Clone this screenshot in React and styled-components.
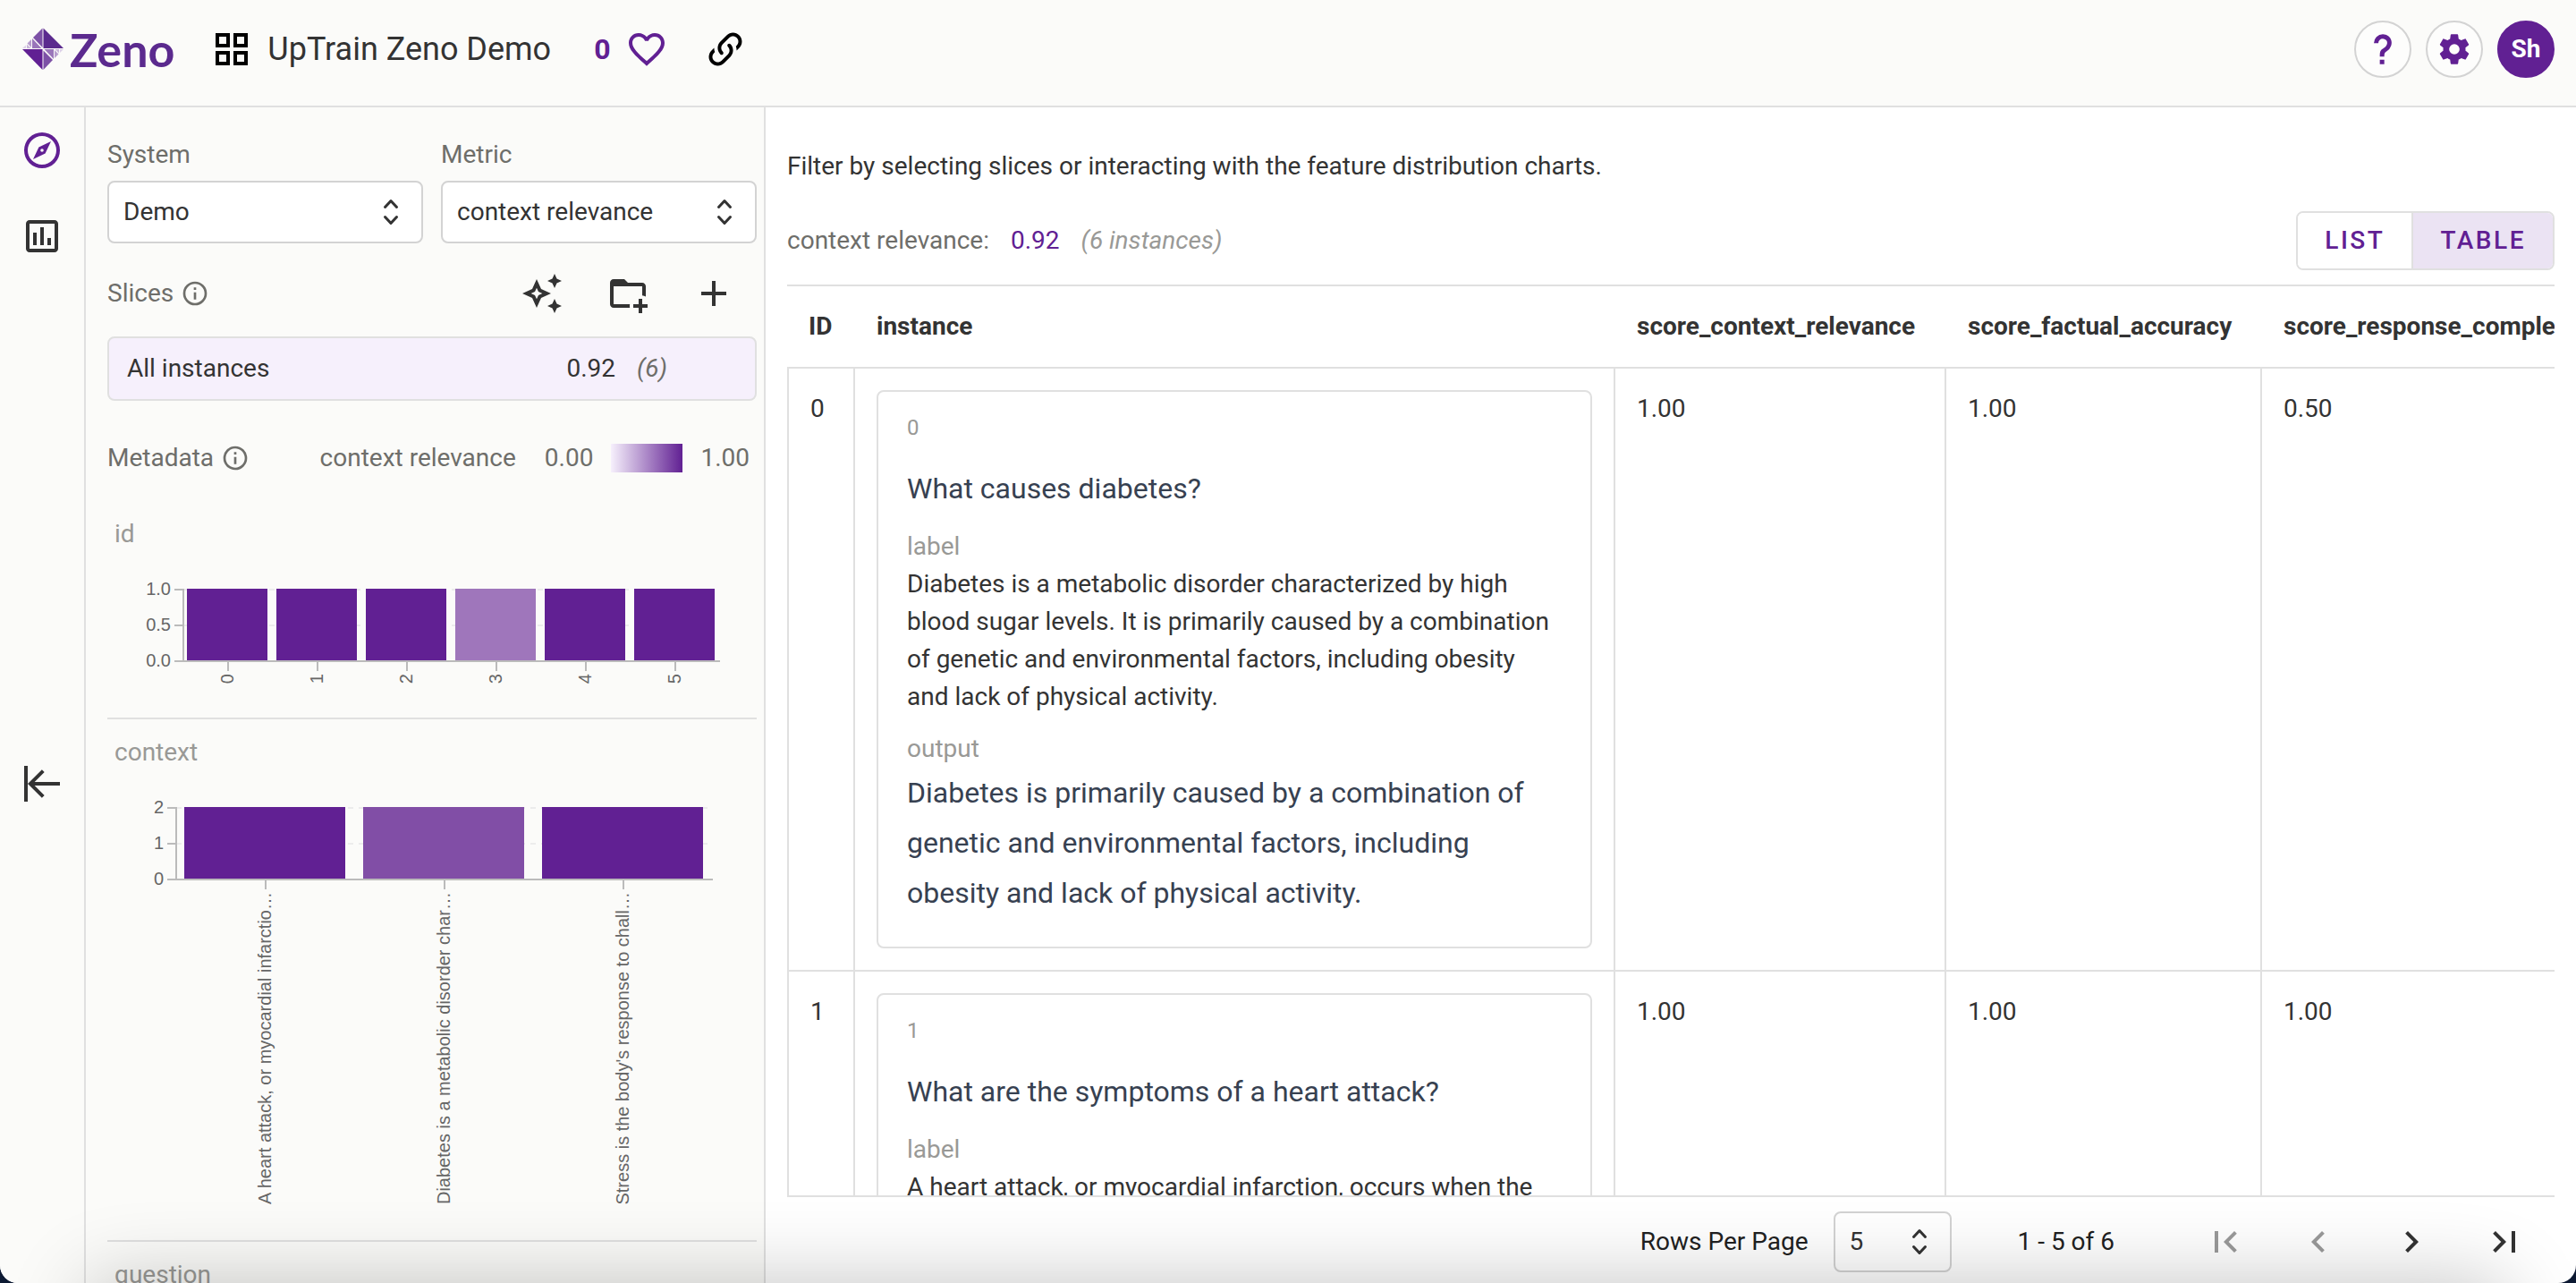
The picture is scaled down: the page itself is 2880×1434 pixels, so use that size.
import React from "react";
import styled, { createGlobalStyle } from "styled-components";

const purple = "#612093";
const line = "#e0e0e0";
const ink = "#333333";
const muted = "#6e6e6a";
const faint = "#999996";

const GlobalStyle = createGlobalStyle`
  *, *::before, *::after { box-sizing: border-box; }
  html, body, #root { height: 100%; }
  body {
    margin: 0;
    overflow: hidden;
    background: #0d1a33;
    color: ${ink};
    font-family: Roboto, "Liberation Sans", sans-serif;
    font-size: 28px;
    line-height: 42px;
  }
  button, select { font: inherit; color: inherit; }
  p, h1, h2 { margin: 0; font-weight: 400; }
`;

const paths = {
  grid: "M3 11h8V3H3v8zm2-6h4v4H5V5zM13 3v8h8V3h-8zm6 6h-4V5h4v4zM3 21h8v-8H3v8zm2-6h4v4H5v-4zM13 21h8v-8h-8v8zm2-6h4v4h-4v-4z",
  heart:
    "M16.5 3c-1.74 0-3.41.81-4.5 2.09C10.91 3.81 9.24 3 7.5 3 4.42 3 2 5.42 2 8.5c0 3.78 3.4 6.86 8.55 11.54L12 21.35l1.45-1.32C18.6 15.36 22 12.28 22 8.5 22 5.42 19.58 3 16.5 3zm-4.4 15.55l-.1.1-.1-.1C7.14 14.24 4 11.39 4 8.5 4 6.5 5.5 5 7.5 5c1.54 0 3.04.99 3.57 2.36h1.87C13.46 5.99 14.96 5 16.5 5c2 0 3.5 1.5 3.5 3.5 0 2.89-3.14 5.74-7.9 10.05z",
  link: "M10.59,13.41C11,13.8 11,14.44 10.59,14.83C10.2,15.22 9.56,15.22 9.17,14.83C7.22,12.88 7.22,9.71 9.17,7.76V7.76L12.71,4.22C14.66,2.27 17.83,2.27 19.78,4.22C21.73,6.17 21.73,9.34 19.78,11.29L18.29,12.78C18.3,11.96 18.17,11.14 17.89,10.36L18.36,9.88C19.54,8.71 19.54,6.81 18.36,5.64C17.19,4.46 15.29,4.46 14.12,5.64L10.59,9.17C9.41,10.34 9.41,12.24 10.59,13.41M13.41,9.17C13.8,8.78 14.44,8.78 14.83,9.17C16.78,11.12 16.78,14.29 14.83,16.24V16.24L11.29,19.78C9.34,21.73 6.17,21.73 4.22,19.78C2.27,17.83 2.27,14.66 4.22,12.71L5.71,11.22C5.7,12.04 5.83,12.86 6.11,13.65L5.64,14.12C4.46,15.29 4.46,17.19 5.64,18.36C6.81,19.54 8.71,19.54 9.88,18.36L13.41,14.83C14.59,13.66 14.59,11.76 13.41,10.59C13,10.2 13,9.56 13.41,9.17Z",
  compass:
    "M7,17L10.2,10.2L17,7L13.8,13.8L7,17M12,11.1A0.9,0.9 0 0,0 11.1,12A0.9,0.9 0 0,0 12,12.9A0.9,0.9 0 0,0 12.9,12A0.9,0.9 0 0,0 12,11.1M12,2A10,10 0 0,1 22,12A10,10 0 0,1 12,22A10,10 0 0,1 2,12A10,10 0 0,1 12,2M12,4A8,8 0 0,0 4,12A8,8 0 0,0 12,20A8,8 0 0,0 20,12A8,8 0 0,0 12,4Z",
  chart:
    "M9 17H7V10H9V17M13 17H11V7H13V17M17 17H15V13H17V17M19 19H5V5H19V19.1M19 3H5C3.9 3 3 3.9 3 5V19C3 20.1 3.9 21 5 21H19C20.1 21 21 20.1 21 19V5C21 3.9 20.1 3 19 3Z",
  collapse:
    "M11.92,19.92L4,12L11.92,4.08L13.33,5.5L7.83,11H22V13H7.83L13.34,18.5L11.92,19.92M4,12V2H2V22H4V12Z",
  info: "M11,9H13V7H11M12,20C7.59,20 4,16.41 4,12C4,7.59 7.59,4 12,4C16.41,4 20,7.59 20,12C20,16.41 16.41,20 12,20M12,2A10,10 0 0,0 2,12A10,10 0 0,0 12,22A10,10 0 0,0 22,12A10,10 0 0,0 12,2M11,17H13V11H11V17Z",
  sparkle:
    "M19 9l1.25-2.75L23 5l-2.75-1.25L19 1l-1.25 2.75L15 5l2.75 1.25L19 9zm0 6l-1.25 2.75L15 19l2.75 1.25L19 23l1.25-2.75L23 19l-2.75-1.25L19 15zm-7.5-5.5L9 4 6.5 9.5 1 12l5.5 2.5L9 20l2.5-5.5L17 12l-5.5-2.5zm-1.51 3.49L9 15.17l-.99-2.18L5.83 12l2.18-.99L9 8.83l.99 2.18 2.18.99-2.18.99z",
  folder:
    "M13 19C13 19.34 13.04 19.67 13.09 20H4C2.9 20 2 19.11 2 18V6C2 4.89 2.89 4 4 4H10L12 6H20C21.1 6 22 6.89 22 8V13.81C21.39 13.46 20.72 13.22 20 13.09V8H4V18H13.09C13.04 18.33 13 18.66 13 19M20 18V15H18V18H15V20H18V23H20V20H23V18H20Z",
  plus: "M19,13H13V19H11V13H5V11H11V5H13V11H19V13Z",
  help: "M10,19H13V22H10V19M12,2C17.35,2.22 19.68,7.62 16.5,11.67C15.67,12.67 14.33,13.33 13.67,14.17C13,15 13,16 13,17H10C10,15.33 10,13.92 10.67,12.92C11.33,11.92 12.67,11.33 13.5,10.67C15.92,8.43 15.32,5.26 12,5A3,3 0 0,0 9,8H6A6,6 0 0,1 12,2Z",
  cog: "M12,15.5A3.5,3.5 0 0,1 8.5,12A3.5,3.5 0 0,1 12,8.5A3.5,3.5 0 0,1 15.5,12A3.5,3.5 0 0,1 12,15.5M19.43,12.97C19.47,12.65 19.5,12.33 19.5,12C19.5,11.67 19.47,11.34 19.43,11L21.54,9.37C21.73,9.22 21.78,8.95 21.66,8.73L19.66,5.27C19.54,5.05 19.27,4.96 19.05,5.05L16.56,6.05C16.04,5.66 15.5,5.32 14.87,5.07L14.5,2.42C14.46,2.18 14.25,2 14,2H10C9.75,2 9.54,2.18 9.5,2.42L9.13,5.07C8.5,5.32 7.96,5.66 7.44,6.05L4.95,5.05C4.73,4.96 4.46,5.05 4.34,5.27L2.34,8.73C2.21,8.95 2.27,9.22 2.46,9.37L4.57,11C4.53,11.34 4.5,11.67 4.5,12C4.5,12.33 4.53,12.65 4.57,12.97L2.46,14.63C2.27,14.78 2.21,15.05 2.34,15.27L4.34,18.73C4.46,18.95 4.73,19.03 4.95,18.95L7.44,17.94C7.96,18.34 8.5,18.68 9.13,18.93L9.5,21.58C9.54,21.82 9.75,22 10,22H14C14.25,22 14.46,21.82 14.5,21.58L14.87,18.93C15.5,18.67 16.04,18.34 16.56,17.94L19.05,18.95C19.27,19.03 19.54,18.95 19.66,18.73L21.66,15.27C21.78,15.05 21.73,14.78 21.54,14.63L19.43,12.97Z",
  first: "M18.41 16.59L13.82 12l4.59-4.59L17 6l-6 6 6 6zM6 6h2v12H6z",
  prev: "M15.41 7.41L14 6l-6 6 6 6 1.41-1.41L10.83 12z",
  next: "M10 6L8.59 7.41 13.17 12l-4.58 4.59L10 18l6-6z",
  last: "M5.59 7.41L10.18 12l-4.59 4.59L7 18l6-6-6-6zM16 6h2v12h-2z",
};

const IconSvg = styled.svg`
  display: block;
  flex: none;
  fill: ${(p) => p.$color || "currentColor"};
`;

function Icon({ name, size = 48, color }) {
  return (
    <IconSvg width={size} height={size} viewBox="0 0 24 24" $color={color} aria-hidden="true">
      <path d={paths[name]} />
    </IconSvg>
  );
}

const Page = styled.div`
  display: flex;
  flex-direction: column;
  height: 100%;
  overflow: hidden;
  background: #fff;
  border-radius: 0 0 20px 20px;
`;

/* Header */

const Header = styled.header`
  display: flex;
  align-items: center;
  justify-content: space-between;
  flex: none;
  height: 120px;
  padding: 0 24px 8px;
  background: #fbfbf9;
  border-bottom: 2px solid ${line};
`;

const HeaderGroup = styled.div`
  display: flex;
  align-items: center;
  gap: ${(p) => p.$gap}px;
`;

const Brand = styled.a`
  display: flex;
  align-items: center;
  gap: 6px;
  margin-right: 40px;
  color: #5b2a8e;
  font-family: Lato, sans-serif;
  font-size: 52px;
  font-weight: 700;
  line-height: 48px;
  text-decoration: none;
`;

const Title = styled.h1`
  margin-left: 16px;
  font-size: 36px;
  line-height: 48px;
`;

const BareButton = styled.button`
  display: flex;
  align-items: center;
  padding: 0;
  border: 0;
  background: none;
  color: ${(p) => p.$color || ink};
  &:disabled { color: #9a9a9a; }
`;

const LikeButton = styled(BareButton)`
  gap: 16px;
  margin: 0 40px 0 48px;
  font-size: 32px;
  font-weight: 700;
`;

const RoundButton = styled.button`
  display: flex;
  align-items: center;
  justify-content: center;
  width: 64px;
  height: 64px;
  padding: 0;
  border-radius: 50%;
  border: 2px solid ${(p) => (p.$solid ? purple : "#d3d3d3")};
  background: ${(p) => (p.$solid ? purple : "#fdfdfc")};
  color: ${(p) => (p.$solid ? "#fff" : purple)};
  font-weight: 700;
`;

function Gem() {
  return (
    <svg width="48" height="48" viewBox="0 0 48 48" aria-hidden="true">
      <path d="M24.500 0.500V23H47Z" fill="#5b2a8e" />
      <path d="M23.500 0.500V22L13 11Z" fill="#7d51a6" />
      <path d="M12 12V23H22.500Z" fill="#9a76ba" />
      <path d="M11 13V22L6.500 17.500Z" fill="#b79dcd" />
      <path d="M6 18.500V23H10.500Z" fill="#c9b6da" />
      <path d="M5 19.500V23H1Z" fill="#ddd1e8" />
      <path d="M1 24H23.500V47Z" fill="#612093" />
      <path d="M24.500 25.500V47L35 36Z" fill="#7d51a6" />
      <path d="M25.500 24H36V35Z" fill="#9a76ba" />
      <path d="M37 25V34L41.500 29.500Z" fill="#b79dcd" />
      <path d="M37.500 24H42V28.500Z" fill="#c9b6da" />
      <path d="M43 24H47L43 28Z" fill="#ddd1e8" />
    </svg>
  );
}

/* Body */

const Body = styled.div`
  display: flex;
  flex: 1;
  min-height: 0;
`;

const Rail = styled.nav`
  display: flex;
  flex-direction: column;
  flex: none;
  width: 96px;
  background: #fbfbf9;
  border-right: 2px solid ${line};
`;

const RailLink = styled.a`
  display: flex;
  align-items: center;
  justify-content: center;
  height: 96px;
  color: ${(p) => (p.$active ? purple : ink)};
`;

const RailMiddle = styled.div`
  display: flex;
  flex: 1;
  align-items: center;
  justify-content: center;
  padding-top: 6px;
`;

const Sidebar = styled.aside`
  display: flex;
  flex-direction: column;
  flex: none;
  width: 760px;
  padding: 32px 8px 0 24px;
  overflow: hidden;
  background: #fbfbf9;
  border-right: 2px solid ${line};
`;

const Fields = styled.div`
  display: flex;
  flex: none;
  gap: 20px;
`;

const Field = styled.div`
  display: flex;
  flex: 1;
  flex-direction: column;
  gap: 8px;
  min-width: 0;
  color: ${muted};
`;

const SelectBox = styled.div`
  position: relative;
  color: ${ink};
  width: ${(p) => p.$width || "100%"};
`;

const SelectInput = styled.select`
  display: block;
  width: 100%;
  height: ${(p) => p.$height}px;
  padding: 0 16px;
  border: 2px solid #d3d3d3;
  border-radius: 8px;
  background: ${(p) => p.$fill};
  appearance: none;
`;

const SelectArrows = styled.svg`
  position: absolute;
  top: 0;
  bottom: 0;
  right: 16px;
  margin: auto 0;
  fill: currentColor;
  pointer-events: none;
`;

function Select({ id, value, height = 70, width, fill = "#fff" }) {
  return (
    <SelectBox $width={width}>
      <SelectInput id={id} $height={height} $fill={fill} defaultValue={value}>
        <option>{value}</option>
      </SelectInput>
      <SelectArrows width="40" height="40" viewBox="0 0 20 20" aria-hidden="true">
        <path d="M10 3a.75.75 0 01.55.24l3.25 3.5a.75.75 0 11-1.1 1.02L10 4.852 7.3 7.76a.75.75 0 01-1.1-1.02l3.25-3.5A.75.75 0 0110 3zm-3.76 9.2a.75.75 0 011.06.04l2.7 2.908 2.7-2.908a.75.75 0 111.1 1.02l-3.25 3.5a.75.75 0 01-1.1 0l-3.25-3.5a.75.75 0 01.04-1.06z" />
      </SelectArrows>
    </SelectBox>
  );
}

const SliceBar = styled.div`
  display: flex;
  flex: none;
  align-items: center;
  justify-content: space-between;
  margin: 32px 24px 24px 0;
  color: ${muted};
`;

const Heading = styled.h2`
  display: flex;
  align-items: center;
  gap: 8px;
  font-size: 28px;
  line-height: 40px;
  color: ${muted};
`;

const Tools = styled.div`
  display: flex;
  gap: 48px;
`;

const SliceRow = styled.button`
  display: flex;
  flex: none;
  align-items: center;
  gap: 24px;
  height: 72px;
  padding: 0 98px 0 20px;
  border: 2px solid ${line};
  border-radius: 8px;
  background: #f6f0fc;
  text-align: left;
`;

const SliceName = styled.span`
  flex: 1;
`;

const Count = styled.em`
  color: ${(p) => p.$color};
`;

const MetaBar = styled.div`
  display: flex;
  flex: none;
  align-items: center;
  gap: 20px;
  margin: 44px 0 28px;
  padding-right: 8px;
  line-height: 40px;
  color: ${muted};
`;

const MetaMetric = styled.span`
  flex: 1;
  margin-right: 12px;
  text-align: right;
`;

const Ramp = styled.span`
  width: 80px;
  height: 32px;
  background: linear-gradient(to right, #f6f0fc, ${purple});
`;

const Section = styled.section`
  flex: none;
  padding-top: 16px;
  border-bottom: 2px solid ${line};
`;

const SectionTitle = styled.h2`
  padding-left: 8px;
  font-size: 28px;
  line-height: 42px;
  color: ${faint};
`;

const Plot = styled.svg`
  display: block;
  overflow: visible;
  font-family: "Liberation Sans", Arial, sans-serif;
  font-size: 20px;
  fill: #666;
`;

/* Vertical bar chart; bars share one height and are tinted by their score. */
function BarChart({ height, axisX, step, barWidth, inset, ticks, bars }) {
  const top = 40;
  const base = 120;
  const end = axisX + step * bars.length;
  return (
    <Plot width="100%" height={height}>
      {ticks.map((t, i) => {
        const y = base + 1 - (80 * i) / (ticks.length - 1);
        return (
          <g key={t}>
            <line x1={axisX} x2={end} y1={y} y2={y} stroke="#ececec" strokeWidth="2" strokeDasharray="6 6" />
            <line x1={axisX - 10} x2={axisX} y1={y} y2={y} stroke="#bbb" strokeWidth="2" />
            <text x={axisX - 14} y={y + 6} textAnchor="end">{t}</text>
          </g>
        );
      })}
      <line x1={axisX} x2={axisX} y1={top} y2={base + 2} stroke="#bbb" strokeWidth="2" />
      {bars.map((b, i) => {
        const mid = axisX + step * (i + 0.5);
        return (
          <g key={b.label}>
            <rect x={axisX + inset + step * i} y={top} width={barWidth} height={80} fill={b.color} />
            <line x1={mid} x2={mid} y1={base} y2={base + 12} stroke="#bbb" strokeWidth="2" />
            <text transform={`translate(${mid + 6} ${base + 15}) rotate(-90)`} textAnchor="end">{b.label}</text>
          </g>
        );
      })}
      <line x1={axisX} x2={end} y1={base + 1} y2={base + 1} stroke="#bbb" strokeWidth="2" />
    </Plot>
  );
}

const idBars = ["0", "1", "2", "3", "4", "5"].map((label) => ({
  label,
  color: label === "3" ? "#9f76bb" : purple,
}));

const contextBars = [
  { label: "A heart attack, or myocardial infarctio…", color: purple },
  { label: "Diabetes is a metabolic disorder char…", color: "#814ea6" },
  { label: "Stress is the body's response to chall…", color: purple },
];

/* Main */

const Main = styled.main`
  display: flex;
  flex: 1;
  flex-direction: column;
  min-width: 0;
  padding: 45px 24px 0;
`;

const Summary = styled.div`
  display: flex;
  align-items: center;
  gap: 24px;
  margin: 29px 0 16px;
  color: ${muted};
`;

const Score = styled.span`
  color: ${purple};
`;

const Toggle = styled.div`
  display: flex;
  margin-left: auto;
  border: 2px solid ${line};
  border-radius: 8px;
  overflow: hidden;
`;

const ToggleButton = styled.button`
  height: 62px;
  padding: 0 30px;
  border: 0;
  background: ${(p) => (p.$on ? "#ebe3f3" : "#fff")};
  color: ${purple};
  font-weight: 500;
  letter-spacing: 0.09em;
  & + & { border-left: 2px solid ${line}; }
`;

const TableArea = styled.div`
  flex: 1;
  min-height: 0;
  overflow: hidden;
  border-top: 2px solid ${line};
  border-bottom: 2px solid ${line};
`;

const Table = styled.table`
  border-collapse: separate;
  border-spacing: 0;
`;

const Th = styled.th`
  min-width: ${(p) => p.$width}px;
  padding: 24px;
  border-bottom: 2px solid ${line};
  text-align: left;
  white-space: nowrap;
`;

const Td = styled.td`
  padding: 24px;
  border: solid ${line};
  border-width: 0 2px 2px 0;
  vertical-align: top;
  &:first-child { border-left-width: 2px; }
`;

const Card = styled.article`
  width: 800px;
  padding: 20px 32px 32px;
  border: 2px solid ${line};
  border-radius: 8px;
`;

const CardId = styled.p`
  margin-bottom: 20px;
  font-size: 24px;
  line-height: 40px;
  color: ${faint};
`;

const CardLarge = styled.p`
  font-size: 32px;
  line-height: 56px;
  color: #374151;
`;

const CardLabel = styled.p`
  margin-top: 16px;
  color: ${faint};
`;

const Footer = styled.footer`
  display: flex;
  align-items: center;
  justify-content: flex-end;
  flex: none;
  padding: 16px 32px 12px 0;
  color: #212121;
`;

const PageRange = styled.span`
  margin: 0 100px 0 74px;
`;

const RowsLabel = styled.label`
  margin-right: 28px;
`;

const Pager = styled.div`
  display: flex;
  gap: 56px;
`;

/* Soft shade rising from the lower window edge. */
const BottomShade = styled.div`
  position: fixed;
  top: 100%;
  left: 100px;
  right: 80px;
  height: 200px;
  box-shadow: 0 0 90px rgba(0, 0, 0, 0.24);
  pointer-events: none;
`;

const columns = [
  { name: "ID", width: 76 },
  { name: "instance", width: 850 },
  { name: "score_context_relevance", width: 370 },
  { name: "score_factual_accuracy", width: 353 },
  { name: "score_response_completeness", width: 420 },
];

const rows = [
  {
    id: 0,
    question: "What causes diabetes?",
    label:
      "Diabetes is a metabolic disorder characterized by high blood sugar levels. It is primarily caused by a combination of genetic and environmental factors, including obesity and lack of physical activity.",
    output:
      "Diabetes is primarily caused by a combination of genetic and environmental factors, including obesity and lack of physical activity.",
    scores: ["1.00", "1.00", "0.50"],
  },
  {
    id: 1,
    question: "What are the symptoms of a heart attack?",
    label: "A heart attack, or myocardial infarction, occurs when the",
    scores: ["1.00", "1.00", "1.00"],
  },
];

export default function App() {
  return (
    <Page>
      <GlobalStyle />
      <Header>
        <HeaderGroup $gap={0}>
          <Brand href="#">
            <Gem />
            Zeno
          </Brand>
          <Icon name="grid" color="#000" />
          <Title>UpTrain Zeno Demo</Title>
          <LikeButton $color={purple}>
            0
            <Icon name="heart" />
          </LikeButton>
          <BareButton $color="#000" aria-label="Copy link">
            <Icon name="link" />
          </BareButton>
        </HeaderGroup>
        <HeaderGroup $gap={16}>
          <RoundButton aria-label="Help"><Icon name="help" size={40} /></RoundButton>
          <RoundButton aria-label="Settings"><Icon name="cog" size={40} /></RoundButton>
          <RoundButton $solid>Sh</RoundButton>
        </HeaderGroup>
      </Header>
      <Body>
        <Rail>
          <RailLink href="#explore" aria-label="Explore" $active><Icon name="compass" /></RailLink>
          <RailLink href="#charts" aria-label="Charts"><Icon name="chart" /></RailLink>
          <RailMiddle>
            <BareButton aria-label="Collapse panel"><Icon name="collapse" /></BareButton>
          </RailMiddle>
        </Rail>
        <Sidebar>
          <Fields>
            <Field>
              <label htmlFor="system">System</label>
              <Select id="system" value="Demo" />
            </Field>
            <Field>
              <label htmlFor="metric">Metric</label>
              <Select id="metric" value="context relevance" />
            </Field>
          </Fields>
          <SliceBar>
            <Heading>Slices <Icon name="info" size={32} /></Heading>
            <Tools>
              <BareButton aria-label="Suggest slices"><Icon name="sparkle" /></BareButton>
              <BareButton aria-label="New folder"><Icon name="folder" /></BareButton>
              <BareButton aria-label="New slice"><Icon name="plus" /></BareButton>
            </Tools>
          </SliceBar>
          <SliceRow>
            <SliceName>All instances</SliceName>
            <span>0.92</span>
            <Count $color={muted}>(6)</Count>
          </SliceRow>
          <MetaBar>
            <Heading>Metadata <Icon name="info" size={32} /></Heading>
            <MetaMetric>context relevance</MetaMetric>
            <span>0.00</span>
            <Ramp />
            <span>1.00</span>
          </MetaBar>
          <Section>
            <SectionTitle>id</SectionTitle>
            <BarChart height={184} axisX={85} step={100} barWidth={90} inset={4} ticks={["0.0", "0.5", "1.0"]} bars={idBars} />
          </Section>
          <Section>
            <SectionTitle>context</SectionTitle>
            <BarChart height={524} axisX={77} step={200} barWidth={180} inset={9} ticks={["0", "1", "2"]} bars={contextBars} />
          </Section>
          <Section>
            <SectionTitle>question</SectionTitle>
          </Section>
        </Sidebar>
        <Main>
          <p>Filter by selecting slices or interacting with the feature distribution charts.</p>
          <Summary>
            <span>context relevance:</span>
            <Score>0.92</Score>
            <Count $color={faint}>(6 instances)</Count>
            <Toggle>
              <ToggleButton>LIST</ToggleButton>
              <ToggleButton $on>TABLE</ToggleButton>
            </Toggle>
          </Summary>
          <TableArea>
            <Table>
              <thead>
                <tr>
                  {columns.map((c) => (
                    <Th key={c.name} $width={c.width}>{c.name}</Th>
                  ))}
                </tr>
              </thead>
              <tbody>
                {rows.map((r) => (
                  <tr key={r.id}>
                    <Td>{r.id}</Td>
                    <Td>
                      <Card>
                        <CardId>{r.id}</CardId>
                        <CardLarge>{r.question}</CardLarge>
                        <CardLabel>label</CardLabel>
                        <p>{r.label}</p>
                        {r.output && (
                          <>
                            <CardLabel>output</CardLabel>
                            <CardLarge>{r.output}</CardLarge>
                          </>
                        )}
                      </Card>
                    </Td>
                    {r.scores.map((s, i) => (
                      <Td key={i}>{s}</Td>
                    ))}
                  </tr>
                ))}
              </tbody>
            </Table>
          </TableArea>
          <Footer>
            <RowsLabel htmlFor="rows">Rows Per Page</RowsLabel>
            <Select id="rows" value="5" height={68} width="132px" fill="transparent" />
            <PageRange>1 - 5 of 6</PageRange>
            <Pager>
              <BareButton disabled aria-label="First page"><Icon name="first" /></BareButton>
              <BareButton disabled aria-label="Previous page"><Icon name="prev" /></BareButton>
              <BareButton aria-label="Next page"><Icon name="next" /></BareButton>
              <BareButton aria-label="Last page"><Icon name="last" /></BareButton>
            </Pager>
          </Footer>
        </Main>
      </Body>
      <BottomShade />
    </Page>
  );
}
